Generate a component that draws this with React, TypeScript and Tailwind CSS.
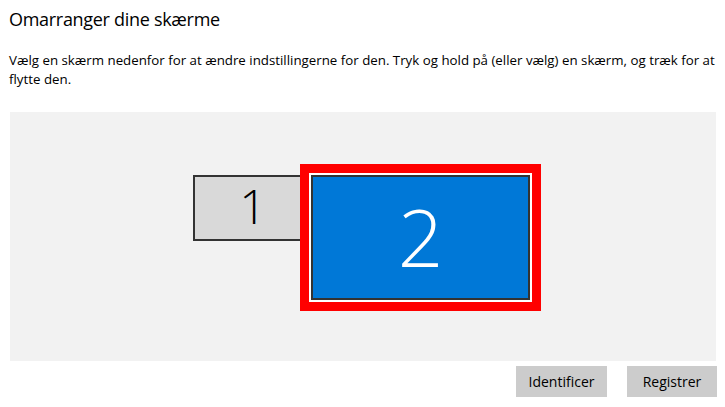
import React from 'react';

const font = { fontFamily: '"Segoe UI", "Open Sans", "Noto Sans", sans-serif' };

function Monitor({ label, active }: { label: string; active?: boolean }) {
  return (
    <div
      className={`w-full h-full flex items-center justify-center border-2 border-[#333333] ${
        active ? 'bg-[#0078d7] text-white text-[80px]' : 'bg-[#d9d9d9] text-black text-[48px]'
      } font-light leading-none`}
    >
      <span className="-mt-1">{label}</span>
    </div>
  );
}

export default function App() {
  return (
    <div className="w-[725px] h-[407px] bg-white text-black overflow-hidden" style={font}>
      <div className="pl-[9px]">
        <h1 className="pt-[5px] text-[18px] leading-[28px] tracking-[-0.3px] font-normal text-black">
          Omarranger dine skærme
        </h1>
        <p className="mt-[18px] text-[13.3px] leading-[19px] text-black whitespace-nowrap">
          Vælg en skærm nedenfor for at ændre indstillingerne for den. Tryk og hold på (eller vælg) en skærm, og træk for at
          <br />
          flytte den.
        </p>
      </div>

      {/* display arrangement canvas */}
      <div className="relative ml-[10px] mt-[23px] w-[706px] h-[249px] bg-[#f2f2f2]">
        <div className="absolute left-[183px] top-[63px] w-[120px] h-[66px]">
          <Monitor label="1" />
        </div>
        <div className="absolute left-[290px] top-[52px] w-[241px] h-[147px] border-[9px] border-[#ff0000] bg-white p-[2px]">
          <Monitor label="2" active />
        </div>
      </div>

      <div className="flex justify-end gap-[20px] mt-[5px] pr-[8px]">
        <button className="w-[91px] h-[31px] bg-[#cccccc] text-[14px] text-black">Identificer</button>
        <button className="w-[90px] h-[31px] bg-[#cccccc] text-[14px] text-black">Registrer</button>
      </div>
    </div>
  );
}
